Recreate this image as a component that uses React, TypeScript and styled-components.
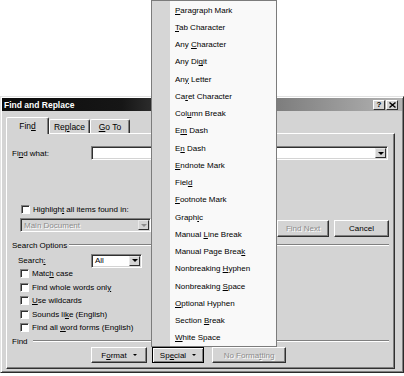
import styled, { createGlobalStyle } from "styled-components";

const GlobalStyle = createGlobalStyle`
  html, body {
    margin: 0;
    padding: 0;
    background: #ffffff;
  }
  body {
    font-family: "Liberation Sans", Arial, sans-serif;
    font-size: 8px;
    color: #000;
  }
  * {
    box-sizing: border-box;
  }
`;

const Stage = styled.div`
  position: relative;
  width: 404px;
  height: 376px;
  padding-top: 96px;
  overflow: hidden;
`;

const Dialog = styled.div`
  width: 404px;
  height: 277px;
  display: flex;
  flex-direction: column;
  padding: 1px;
  background: #d4d4d4;
  border-top: 1px solid #e2e2e2;
  border-left: 1px solid #e2e2e2;
  border-right: 1px solid #2a2a2a;
  border-bottom: 1px solid #2a2a2a;
  box-shadow: inset 1px 1px #ffffff, inset -1px -1px #808080;
`;

const TitleBar = styled.div`
  height: 13px;
  display: flex;
  align-items: center;
  padding: 0 4px 0 2px;
  background: linear-gradient(
    to right,
    #0c0c0c 0%,
    #161616 30%,
    #6e6e6e 60%,
    #b4b4b4 100%
  );
`;

const Title = styled.span`
  flex: 1;
  color: #fff;
  font-weight: bold;
  font-size: 8.5px;
`;

const TitleButton = styled.div`
  width: 12px;
  height: 10px;
  display: flex;
  align-items: center;
  justify-content: center;
  background: #d4d4d4;
  border-top: 1px solid #fff;
  border-left: 1px solid #fff;
  border-right: 1px solid #303030;
  border-bottom: 1px solid #303030;
  font-weight: bold;
  font-size: 8px;
  line-height: 1;
  & + & {
    margin-left: 1px;
  }
`;

const TabStrip = styled.div`
  display: flex;
  align-items: flex-end;
  height: 16px;
  margin: 6px 0 0 4px;
  position: relative;
  z-index: 1;
`;

const Tab = styled.div<{ $active?: boolean; $w: number }>`
  width: ${(p) => p.$w}px;
  height: ${(p) => (p.$active ? 17 : 14)}px;
  margin-bottom: ${(p) => (p.$active ? -1 : 0)}px;
  display: flex;
  align-items: center;
  justify-content: center;
  padding-bottom: ${(p) => (p.$active ? 1 : 0)}px;
  background: #d4d4d4;
  border-top: 1px solid #fff;
  border-left: 1px solid #fff;
  border-right: 1px solid #303030;
  border-radius: 2px 2px 0 0;
  box-shadow: inset -1px 0 #808080;
  font-size: 8.5px;
`;

const Panel = styled.div`
  height: 236px;
  margin: 0 7px 0 4px;
  display: flex;
  flex-direction: column;
  border-top: 1px solid #fff;
  border-left: 1px solid #fff;
  border-right: 1px solid #303030;
  border-bottom: 1px solid #303030;
  box-shadow: inset -1px -1px #808080;
`;

const Row = styled.div<{ $top: number; $h: number }>`
  display: flex;
  align-items: center;
  margin-top: ${(p) => p.$top}px;
  height: ${(p) => p.$h}px;
  flex-shrink: 0;
`;

const Label = styled.span<{ $left: number; $w?: number }>`
  margin-left: ${(p) => p.$left}px;
  width: ${(p) => (p.$w ? `${p.$w}px` : "auto")};
  white-space: nowrap;
  flex-shrink: 0;
`;

const Field = styled.div<{ $left: number; $w?: number; $disabled?: boolean }>`
  margin-left: ${(p) => p.$left}px;
  ${(p) => (p.$w ? `width: ${p.$w}px;` : "flex: 1; margin-right: 6px;")}
  height: 14px;
  display: flex;
  align-items: center;
  padding-left: 2px;
  background: ${(p) => (p.$disabled ? "#d4d4d4" : "#fff")};
  color: ${(p) => (p.$disabled ? "#8c8c8c" : "#000")};
  border-top: 1px solid #808080;
  border-left: 1px solid #808080;
  border-right: 1px solid #fff;
  border-bottom: 1px solid #fff;
  box-shadow: inset 1px 1px #303030, inset -1px -1px #d4d4d4;
  text-shadow: ${(p) => (p.$disabled ? "1px 1px #fff" : "none")};
`;

const FieldText = styled.span`
  flex: 1;
  padding-left: 1px;
  white-space: nowrap;
  overflow: hidden;
`;

const DropButton = styled.div`
  width: 11px;
  height: 10px;
  margin-right: 1px;
  display: flex;
  align-items: center;
  justify-content: center;
  background: #d4d4d4;
  border-top: 1px solid #e8e8e8;
  border-left: 1px solid #e8e8e8;
  border-right: 1px solid #303030;
  border-bottom: 1px solid #303030;
`;

const Arrow = styled.span<{ $grey?: boolean }>`
  width: 0;
  height: 0;
  border-left: 3px solid transparent;
  border-right: 3px solid transparent;
  border-top: 3px solid ${(p) => (p.$grey ? "#8c8c8c" : "#000")};
`;

const ButtonArrow = styled(Arrow)`
  margin-left: 6px;
  border-left-width: 2.5px;
  border-right-width: 2.5px;
  border-top-width: 2.5px;
`;

const Check = styled.span<{ $left: number }>`
  width: 9px;
  height: 9px;
  margin-left: ${(p) => p.$left}px;
  background: #fff;
  border-top: 1px solid #808080;
  border-left: 1px solid #808080;
  border-right: 1px solid #fff;
  border-bottom: 1px solid #fff;
  box-shadow: inset 1px 1px #303030;
  flex-shrink: 0;
`;

const CheckLabel = styled.span`
  margin-left: 3px;
  white-space: pre;
`;

const Button = styled.div<{
  $left: number;
  $w: number;
  $disabled?: boolean;
  $pressed?: boolean;
}>`
  margin-left: ${(p) => p.$left}px;
  width: ${(p) => p.$w}px;
  height: 100%;
  display: flex;
  align-items: center;
  justify-content: center;
  background: #d4d4d4;
  color: ${(p) => (p.$disabled ? "#8c8c8c" : "#000")};
  text-shadow: ${(p) => (p.$disabled ? "1px 1px #fff" : "none")};
  ${(p) =>
    p.$pressed
      ? `border: 1px solid #000;
         box-shadow: inset 1px 1px #fff, inset -1px -1px #808080;`
      : `border-top: 1px solid #fff;
         border-left: 1px solid #fff;
         border-right: 1px solid #303030;
         border-bottom: 1px solid #303030;
         box-shadow: inset -1px -1px #808080;`}
  white-space: nowrap;
  flex-shrink: 0;
`;

const ButtonGroup = styled.div`
  display: flex;
  height: 17px;
  align-self: flex-end;
  margin-left: auto;
  margin-right: 5px;
`;

const BandRow = styled.div`
  display: flex;
  align-items: flex-start;
  margin-top: 4px;
  height: 19px;
  flex-shrink: 0;
`;

const GroupHeader = styled.div<{ $top: number }>`
  display: flex;
  align-items: center;
  margin-top: ${(p) => p.$top}px;
  height: 10px;
  flex-shrink: 0;
`;

const Etch = styled.span<{ $gap: number }>`
  flex: 1;
  height: 2px;
  margin: 0 5px 0 ${(p) => p.$gap}px;
  border-top: 1px solid #808080;
  border-bottom: 1px solid #fff;
`;

const CheckRow = styled.div`
  display: flex;
  align-items: center;
  height: 13.5px;
  flex-shrink: 0;
`;

const BottomButtons = styled.div`
  display: flex;
  margin-top: 1px;
  height: 16px;
  flex-shrink: 0;
`;

const Menu = styled.div`
  position: absolute;
  top: 0;
  left: 151px;
  width: 126px;
  height: 347px;
  padding-top: 0.5px;
  border: 1px solid #7c7c7c;
  background: linear-gradient(to right, #d6d6d6 0 18px, #f9f9f9 18px);
  z-index: 5;
`;

const MenuItem = styled.div`
  height: 17.25px;
  display: flex;
  align-items: center;
  padding-left: 23px;
`;

const MenuText = styled.span`
  white-space: pre;
`;

const menuItems: [string, string, string][] = [
  ["", "P", "aragraph Mark"],
  ["", "T", "ab Character"],
  ["Any ", "C", "haracter"],
  ["Any Di", "g", "it"],
  ["An", "y", " Letter"],
  ["Ca", "r", "et Character"],
  ["Col", "u", "mn Break"],
  ["E", "m", " Dash"],
  ["E", "n", " Dash"],
  ["", "E", "ndnote Mark"],
  ["Fiel", "d", ""],
  ["", "F", "ootnote Mark"],
  ["Graph", "i", "c"],
  ["Manual ", "L", "ine Break"],
  ["Manual Page Brea", "k", ""],
  ["Nonbreaking ", "H", "yphen"],
  ["Nonbreaking ", "S", "pace"],
  ["", "O", "ptional Hyphen"],
  ["Section ", "B", "reak"],
  ["", "W", "hite Space"],
];

const checks: [string, string, string][] = [
  ["Matc", "h", " case"],
  ["Find whole words onl", "y", ""],
  ["", "U", "se wildcards"],
  ["Sounds li", "k", "e (English)"],
  ["Find all ", "w", "ord forms (English)"],
];

function App() {
  return (
    <>
      <GlobalStyle />
      <Stage>
        <Dialog>
          <TitleBar>
            <Title>Find and Replace</Title>
            <TitleButton>?</TitleButton>
            <TitleButton>
              <svg width="7" height="6" viewBox="0 0 7 6">
                <path
                  d="M0.5 0.5 L6.5 5.5 M6.5 0.5 L0.5 5.5"
                  stroke="#000"
                  strokeWidth="1.4"
                />
              </svg>
            </TitleButton>
          </TitleBar>

          <TabStrip>
            <Tab $active $w={43}>
              Fin<u>d</u>
            </Tab>
            <Tab $w={41}>
              Re<u>p</u>lace
            </Tab>
            <Tab $w={40}>
              <u>G</u>o To
            </Tab>
          </TabStrip>

          <Panel>
            <Row $top={12} $h={14}>
              <Label $left={5} $w={79}>
                Fi<u>n</u>d what:
              </Label>
              <Field $left={0}>
                <FieldText />
                <DropButton>
                  <Arrow />
                </DropButton>
              </Field>
            </Row>

            <Row $top={44} $h={10}>
              <Check $left={14} />
              <CheckLabel>
                Highligh<u>t</u> all items found in:
              </CheckLabel>
            </Row>

            <BandRow>
              <Field $left={13} $w={131} $disabled>
                <FieldText>Main Document</FieldText>
                <DropButton>
                  <Arrow $grey />
                </DropButton>
              </Field>
              <ButtonGroup>
                <Button $left={0} $w={52} $disabled>
                  Find Next
                </Button>
                <Button $left={5} $w={55}>
                  Cancel
                </Button>
              </ButtonGroup>
            </BandRow>

            <GroupHeader $top={3}>
              <Label $left={5}>Search Options</Label>
              <Etch $gap={2} />
            </GroupHeader>

            <Row $top={4} $h={13}>
              <Label $left={11} $w={73}>
                Search<u>:</u>
              </Label>
              <Field $left={0} $w={51}>
                <FieldText>All</FieldText>
                <DropButton>
                  <Arrow />
                </DropButton>
              </Field>
            </Row>

            {checks.map(([a, k, b]) => (
              <CheckRow key={a + k + b}>
                <Check $left={13} />
                <CheckLabel>
                  {a}
                  <u>{k}</u>
                  {b}
                </CheckLabel>
              </CheckRow>
            ))}

            <GroupHeader $top={1.5}>
              <Label $left={5}>Find</Label>
              <Etch $gap={5} />
            </GroupHeader>

            <BottomButtons>
              <Button $left={84} $w={56}>
                F<u>o</u>rmat
                <ButtonArrow />
              </Button>
              <Button $left={5} $w={52} $pressed>
                Sp<u>e</u>cial
                <ButtonArrow />
              </Button>
              <Button $left={8} $w={74} $disabled>
                No Forma<u>t</u>ting
              </Button>
            </BottomButtons>
          </Panel>
        </Dialog>

        <Menu>
          {menuItems.map(([a, k, b]) => (
            <MenuItem key={a + k + b}>
              <MenuText>
                {a}
                <u>{k}</u>
                {b}
              </MenuText>
            </MenuItem>
          ))}
        </Menu>
      </Stage>
    </>
  );
}

export default App;
